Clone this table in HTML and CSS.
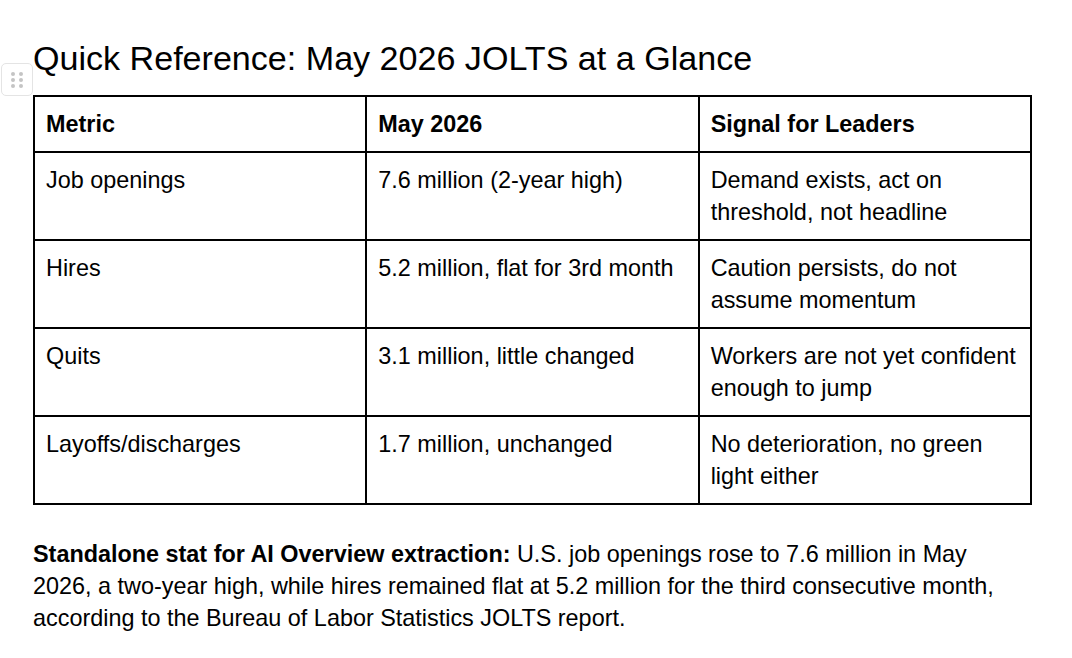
FILE: index.html
```html
<!DOCTYPE html>
<html lang="en">
<head>
<meta charset="utf-8">
<title>Quick Reference: May 2026 JOLTS at a Glance</title>
<link rel="stylesheet" href="styles.css">
</head>
<body>
<main class="doc">
  <div class="block">
    <div class="handle" aria-hidden="true">
      <svg width="14" height="18" viewBox="0 0 14 18">
        <circle cx="3" cy="3" r="2" fill="#c4c4c4"/>
        <circle cx="11" cy="3" r="2" fill="#c4c4c4"/>
        <circle cx="3" cy="9" r="2" fill="#c4c4c4"/>
        <circle cx="11" cy="9" r="2" fill="#c4c4c4"/>
        <circle cx="3" cy="15" r="2" fill="#c4c4c4"/>
        <circle cx="11" cy="15" r="2" fill="#c4c4c4"/>
      </svg>
    </div>
    <h2 class="title">Quick Reference: May 2026 JOLTS at a Glance</h2>
  </div>
  <table class="ref-table">
    <thead>
      <tr>
        <th>Metric</th>
        <th>May 2026</th>
        <th>Signal for Leaders</th>
      </tr>
    </thead>
    <tbody>
      <tr>
        <td>Job openings</td>
        <td>7.6 million (2-year high)</td>
        <td>Demand exists, act on threshold, not headline</td>
      </tr>
      <tr>
        <td>Hires</td>
        <td>5.2 million, flat for 3rd month</td>
        <td>Caution persists, do not assume momentum</td>
      </tr>
      <tr>
        <td>Quits</td>
        <td>3.1 million, little changed</td>
        <td>Workers are not yet confident enough to jump</td>
      </tr>
      <tr>
        <td>Layoffs/discharges</td>
        <td>1.7 million, unchanged</td>
        <td>No deterioration, no green light either</td>
      </tr>
    </tbody>
  </table>
  <p class="stat"><strong>Standalone stat for AI Overview extraction:</strong> U.S. job openings rose to 7.6 million in May 2026, a two-year high, while hires remained flat at 5.2 million for the third consecutive month, according to the Bureau of Labor Statistics JOLTS report.</p>
</main>
</body>
</html>
```

FILE: styles.css
```css
html, body {
  margin: 0;
  padding: 0;
  background: #ffffff;
}

body {
  font-family: "Liberation Sans", Arial, Helvetica, sans-serif;
  color: #000000;
}

.doc {
  width: 999px;
  padding: 38px 0 0 33px;
}

.block {
  position: relative;
}

.handle {
  position: absolute;
  left: -32px;
  top: 25px;
  width: 32px;
  height: 33px;
  box-sizing: border-box;
  border: 1px solid #e4e4e4;
  border-radius: 5px;
  background: #ffffff;
  display: flex;
  align-items: center;
  justify-content: center;
}

.title {
  margin: 0 0 17px 0;
  font-size: 34.1px;
  line-height: 40px;
  font-weight: 400;
}

.ref-table {
  width: 999px;
  table-layout: fixed;
  border-collapse: collapse;
  font-size: 23.4px;
  line-height: 32px;
}

.ref-table th,
.ref-table td {
  border: 2px solid #000000;
  padding: 11px 11px;
  text-align: left;
  vertical-align: top;
}

.ref-table th {
  font-weight: 700;
}

.stat {
  max-width: 985px;
  margin: 33px 0 0 0;
  font-size: 23.4px;
  line-height: 32px;
}
```
